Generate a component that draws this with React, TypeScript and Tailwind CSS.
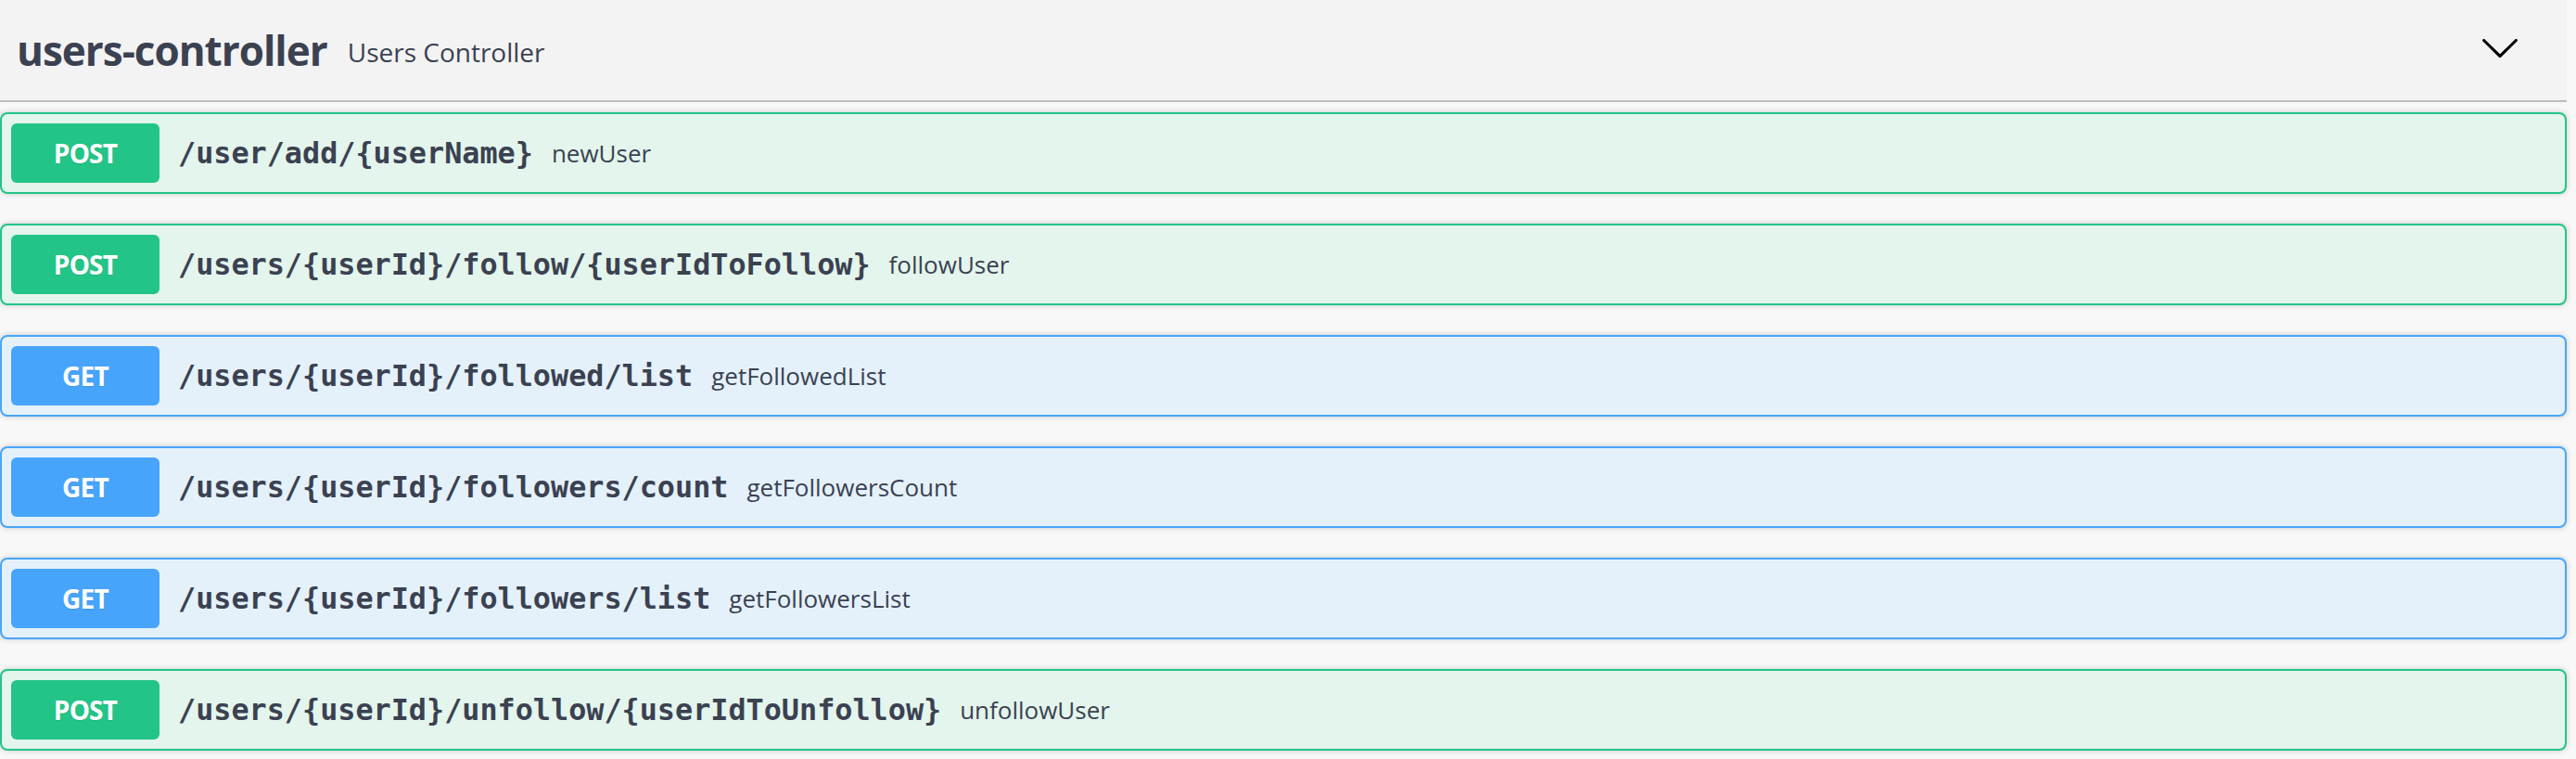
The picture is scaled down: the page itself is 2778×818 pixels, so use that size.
type Method = 'POST' | 'GET'

interface Operation {
    method: Method
    path: string
    summary: string
}

const operations: Operation[] = [
    { method: 'POST', path: '/user/add/{userName}', summary: 'newUser' },
    { method: 'POST', path: '/users/{userId}/follow/{userIdToFollow}', summary: 'followUser' },
    { method: 'GET', path: '/users/{userId}/followed/list', summary: 'getFollowedList' },
    { method: 'GET', path: '/users/{userId}/followers/count', summary: 'getFollowersCount' },
    { method: 'GET', path: '/users/{userId}/followers/list', summary: 'getFollowersList' },
    { method: 'POST', path: '/users/{userId}/unfollow/{userIdToUnfollow}', summary: 'unfollowUser' },
]

const styles: Record<Method, { row: string; badge: string }> = {
    POST: { row: 'bg-[#e3f5ec] border-[#23c487]', badge: 'bg-[#23c487]' },
    GET: { row: 'bg-[#e4f1fb] border-[#49a6f8]', badge: 'bg-[#47a4fb]' },
}

function OperationRow({ op }: { op: Operation }) {
    const s = styles[op.method]
    return (
        <div className={`flex items-center h-[88px] p-[10px] border-2 rounded-[8px] shadow-[0_0_6px_rgba(0,0,0,0.19)] ${s.row}`}>
            <span
                className={`flex items-center justify-center w-[160px] h-[64px] rounded-[6px] text-white font-bold text-[28px] tracking-[-0.8px] [text-shadow:0_1px_0_rgba(0,0,0,0.1)] ${s.badge}`}
                style={{ fontFamily: '"Open Sans", sans-serif' }}
            >
                {op.method}
            </span>
            <span
                className="px-[20px] text-[31.8px] font-bold text-[#3b4151]"
                style={{ fontFamily: '"DejaVu Sans Mono", monospace' }}
            >
                {op.path}
            </span>
            <span className="text-[26px] text-[#3b4151]" style={{ fontFamily: '"Open Sans", sans-serif' }}>
                {op.summary}
            </span>
        </div>
    )
}

export default function App() {
    return (
        <div className="w-[2778px] h-[818px] bg-[#f8f8f8] overflow-hidden">
            <div className="w-[2768px]">
                <div className="flex items-center h-[110px] pl-[18px] pr-[50px] bg-[#f3f3f3] border-b-2 border-[#bcbec3]">
                    <h4
                        className="text-[44px] font-bold tracking-[-1px] text-[#3b4151] leading-none"
                        style={{ fontFamily: '"Open Sans", sans-serif' }}
                    >
                        users-controller
                    </h4>
                    <span
                        className="ml-[22px] mt-[4px] text-[28px] text-[#3b4151] leading-none"
                        style={{ fontFamily: '"Open Sans", sans-serif' }}
                    >
                        Users Controller
                    </span>
                    <div className="flex-1" />
                    <svg width="44" height="44" viewBox="0 0 20 20" className="mb-[6px]" fill="#000">
                        <path d="M17.418 6.109c.272-.268.709-.268.979 0s.271.701 0 .969l-7.908 7.83c-.27.268-.707.268-.979 0l-7.908-7.83c-.27-.268-.27-.701 0-.969.271-.268.709-.268.979 0L10 13.25l7.418-7.141z" />
                    </svg>
                </div>
                <div className="flex flex-col gap-[32px] pt-[11px]">
                    {operations.map((op) => (
                        <OperationRow key={op.path} op={op} />
                    ))}
                </div>
            </div>
        </div>
    )
}
